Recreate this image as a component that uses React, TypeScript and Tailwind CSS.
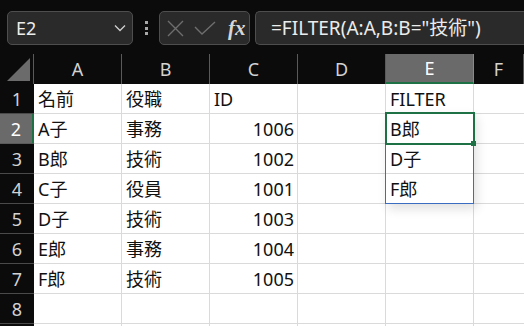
const FONT = { fontFamily: '"Noto Sans", "Noto Sans CJK JP", sans-serif' };

const COLS = ["A", "B", "C", "D", "E", "F"];

const DATA: string[][] = [
  ["名前", "役職", "ID", "", "FILTER", ""],
  ["A子", "事務", "1006", "", "B郎", ""],
  ["B郎", "技術", "1002", "", "D子", ""],
  ["C子", "役員", "1001", "", "F郎", ""],
  ["D子", "技術", "1003", "", "", ""],
  ["E郎", "事務", "1004", "", "", ""],
  ["F郎", "技術", "1005", "", "", ""],
  ["", "", "", "", "", ""],
  ["", "", "", "", "", ""],
];

function Toolbar() {
  return (
    <div className="flex h-[54px] items-start bg-[#0b0b0b] pt-[11px]">
      {/* name box */}
      <div className="ml-[7px] flex h-[34px] w-[126px] items-center justify-between rounded-[5px] border border-[#4e4e4e] bg-[#2a2a2a] pl-[8px] pr-[5px]">
        <span className="text-[18px] leading-none text-[#ececec]">E2</span>
        <svg width="12" height="8" viewBox="0 0 12 8" className="mr-[1px]">
          <polyline points="1,1.5 6,6.5 11,1.5" fill="none" stroke="#cfcfcf" strokeWidth="1.3" />
        </svg>
      </div>
      {/* dots */}
      <div className="ml-[12px] mr-[11px] flex h-[34px] flex-col items-center justify-center gap-[2.5px]">
        <span className="h-[3px] w-[3px] bg-[#a8a8a8]" />
        <span className="h-[3px] w-[3px] bg-[#a8a8a8]" />
        <span className="h-[3px] w-[3px] bg-[#a8a8a8]" />
      </div>
      {/* cancel / enter / fx */}
      <div className="flex h-[34px] w-[91px] items-center rounded-[5px] border border-[#4e4e4e] bg-[#2a2a2a] pl-[7px]">
        <svg width="17" height="17" viewBox="0 0 17 17">
          <path d="M1 1 L16 16 M16 1 L1 16" stroke="#6e6e6e" strokeWidth="1.4" fill="none" />
        </svg>
        <svg width="22" height="15" viewBox="0 0 22 15" className="ml-[10px]">
          <polyline points="1,6 8,13 21,1" fill="none" stroke="#6e6e6e" strokeWidth="1.4" />
        </svg>
        <span
          className="ml-[12px] text-[21px] font-bold italic leading-none text-[#d6d6d6]"
          style={{ fontFamily: '"Liberation Serif", "DejaVu Serif", serif' }}
        >
          fx
        </span>
      </div>
      {/* formula bar */}
      <div className="ml-[5px] flex h-[34px] flex-1 items-center rounded-l-[5px] border border-r-0 border-[#4e4e4e] bg-[#2a2a2a] pl-[15px]">
        <span className="text-[19px] leading-none text-[#ececec]">=FILTER(A:A,B:B="技術")</span>
      </div>
    </div>
  );
}

function Grid() {
  return (
    <div className="relative grid grid-cols-[34px_88px_88px_88px_88px_88px_1fr]">
      {/* corner */}
      <div className="flex h-[30px] items-end justify-end border-r border-[#5a5a5a] bg-[#0b0b0b] pb-[3px] pr-[3px]">
        <svg width="23" height="23" viewBox="0 0 23 23">
          <polygon points="23,0 23,23 0,23" fill="#6b6b6b" />
        </svg>
      </div>
      {COLS.map((c) =>
        c === "E" ? (
          <div
            key={c}
            className="flex h-[30px] items-center justify-center border-b-2 border-r border-b-[#1e7145] border-r-[#8a8a8a] bg-[#6a6a6a] pt-[1px] text-[18px] text-white"
          >
            {c}
          </div>
        ) : (
          <div
            key={c}
            className="flex h-[30px] items-center justify-center border-r border-[#5a5a5a] bg-[#0b0b0b] pt-[1px] text-[18px] text-[#d2d2d2]"
          >
            {c}
          </div>
        )
      )}
      {DATA.map((row, r) => (
        <Row key={r} n={r + 1} cells={row} />
      ))}

      {/* spill range */}
      <div className="absolute left-[385px] top-[58px] h-[92px] w-[89px] border border-[#3a6cc2] shadow-[3px_5px_10px_rgba(0,0,0,0.12)]" />
      {/* active cell */}
      <div className="absolute left-[385px] top-[58px] h-[33px] w-[90px] border-2 border-[#1e7145]" />
      <div className="absolute left-[471px] top-[87px] h-[5px] w-[5px] bg-[#1e7145]" />
    </div>
  );
}

function Row({ n, cells }: { n: number; cells: string[] }) {
  const active = n === 2;
  return (
    <>
      <div
        className={`flex h-[30px] items-center justify-center border-b pt-[1px] text-[18px] ${
          active
            ? "border-r-2 border-b-[#5a5a5a] border-r-[#1e7145] bg-[#6a6a6a] text-white"
            : "border-[#4a4a4a] bg-[#0b0b0b] text-[#d2d2d2]"
        }`}
      >
        {n < 9 ? n : ""}
      </div>
      {cells.map((v, i) => {
        const num = /^\d+$/.test(v);
        return (
          <div
            key={i}
            className={`flex h-[30px] items-center border-b border-[#dadada] bg-white pt-[1px] text-[18px] text-[#111] ${
              i < 5 ? "border-r" : ""
            } ${num ? "justify-end pr-[3px]" : "pl-[4px]"}`}
          >
            {v}
          </div>
        );
      })}
    </>
  );
}

export default function App() {
  return (
    <div className="h-[326px] w-[524px] overflow-hidden bg-white" style={FONT}>
      <Toolbar />
      <Grid />
    </div>
  );
}
